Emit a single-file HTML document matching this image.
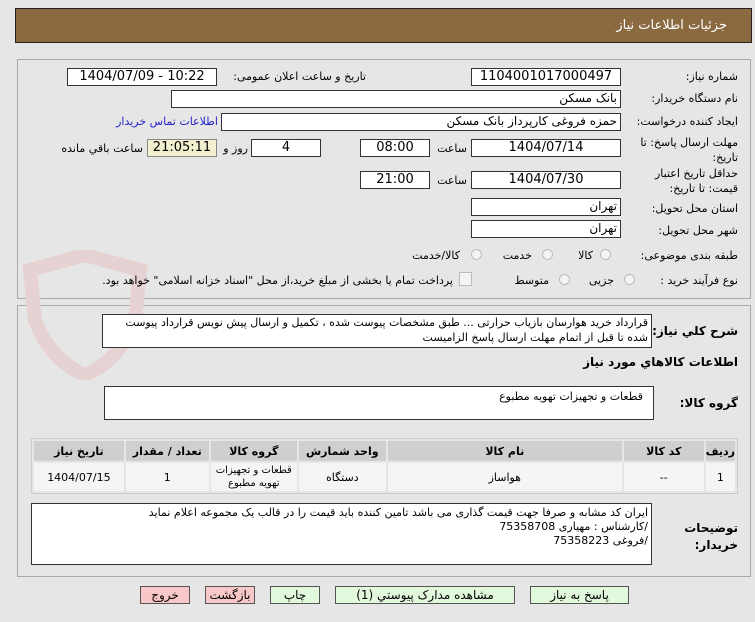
<!DOCTYPE html>
<html><head><meta charset="utf-8"><style>
body{margin:0;width:755px;height:622px;background:#e6e6e6;font-family:"DejaVu Sans","Liberation Sans",sans-serif;font-size:11px;color:#000;position:relative;overflow:hidden}
.a{position:absolute;white-space:nowrap}
.b{position:absolute;background:#fff;border:1px solid #333;box-sizing:border-box;text-align:center;line-height:15px;font-size:13px}
.r{direction:rtl;text-align:right;padding-right:3px;font-size:12px}
.l{position:absolute;direction:rtl;text-align:right;white-space:nowrap}
.p{position:absolute;border:1px solid #aaa;box-sizing:border-box}
.rad{position:absolute;width:11px;height:11px;border:1px solid #bbb;border-radius:50%;background:#f4f4f4;box-sizing:border-box}
table{position:absolute;border-collapse:separate;border-spacing:2px;background:#e6e6e6;border:1px solid #ccc}
th{background:#cfcfcf;font-weight:bold;height:20px;font-size:11px;padding:0}
td{background:#f5f5f5;text-align:center;height:28px;font-size:11px;padding:0}
.btn{position:absolute;top:586px;height:18px;border:1px solid #555;box-sizing:border-box;text-align:center;line-height:16px;font-size:12px}
</style></head><body>
<div class="a" style="left:15px;top:8px;width:737px;height:35px;background:#8b6a42;border:1px solid #222;box-sizing:border-box"></div>
<div class="l" style="right:28px;top:18px;color:#fff;font-size:13px">جزئیات اطلاعات نیاز</div>

<div class="p" style="left:17px;top:59px;width:734px;height:240px"></div>
<div class="p" style="left:17px;top:305px;width:734px;height:272px"></div>

<svg class="a" style="left:20px;top:250px" width="130" height="130"><path d="M10 20 L65 5 L120 20 L115 70 Q100 110 65 125 Q30 110 15 70 Z" fill="none" stroke="#e6d2d2" stroke-width="14"/></svg>

<div class="l" style="right:17px;top:70px">شماره نیاز:</div>
<div class="b" style="left:471px;top:68px;width:150px;height:18px">1104001017000497</div>
<div class="l" style="right:389px;top:70px">تاریخ و ساعت اعلان عمومی:</div>
<div class="b" style="left:67px;top:68px;width:150px;height:18px">1404/07/09 - 10:22</div>

<div class="l" style="right:17px;top:92px">نام دستگاه خریدار:</div>
<div class="b r" style="left:171px;top:90px;width:450px;height:18px">بانک مسکن</div>

<div class="l" style="right:17px;top:115px">ایجاد کننده درخواست:</div>
<div class="b r" style="left:221px;top:113px;width:400px;height:18px">حمزه فروغی کارپرداز بانک مسکن</div>
<div class="l" style="right:537px;top:115px;color:#2222cc">اطلاعات تماس خریدار</div>

<div class="l" style="right:17px;top:135px;line-height:15px">مهلت ارسال پاسخ: تا<br>تاریخ:</div>
<div class="b" style="left:471px;top:139px;width:150px;height:18px">1404/07/14</div>
<div class="l" style="right:288px;top:142px">ساعت</div>
<div class="b" style="left:360px;top:139px;width:70px;height:18px">08:00</div>
<div class="b" style="left:251px;top:139px;width:70px;height:18px">4</div>
<div class="l" style="right:507px;top:142px">روز و</div>
<div class="b" style="left:147px;top:139px;width:70px;height:18px;background:#f3f0cf;border-color:#888">21:05:11</div>
<div class="l" style="right:612px;top:142px">ساعت باقي مانده</div>

<div class="l" style="right:17px;top:166px;line-height:15px">حداقل تاریخ اعتبار<br>قیمت: تا تاریخ:</div>
<div class="b" style="left:471px;top:171px;width:150px;height:18px">1404/07/30</div>
<div class="l" style="right:288px;top:174px">ساعت</div>
<div class="b" style="left:360px;top:171px;width:70px;height:18px">21:00</div>

<div class="l" style="right:17px;top:202px">استان محل تحویل:</div>
<div class="b r" style="left:471px;top:198px;width:150px;height:18px">تهران</div>
<div class="l" style="right:17px;top:224px">شهر محل تحویل:</div>
<div class="b r" style="left:471px;top:220px;width:150px;height:18px">تهران</div>

<div class="l" style="right:17px;top:249px">طبقه بندی موضوعی:</div>
<div class="rad" style="left:600px;top:249px"></div><div class="l" style="right:162px;top:249px">کالا</div>
<div class="rad" style="left:542px;top:249px"></div><div class="l" style="right:223px;top:249px">خدمت</div>
<div class="rad" style="left:471px;top:249px"></div><div class="l" style="right:295px;top:249px">کالا/خدمت</div>

<div class="l" style="right:17px;top:274px">نوع فرآیند خرید :</div>
<div class="rad" style="left:624px;top:274px"></div><div class="l" style="right:141px;top:274px">جزیی</div>
<div class="rad" style="left:559px;top:274px"></div><div class="l" style="right:206px;top:274px">متوسط</div>
<div class="a" style="left:459px;top:272px;width:11px;height:12px;border:1px solid #bbb;background:#f4f4f4"></div>
<div class="l" style="right:302px;top:274px">پرداخت تمام یا بخشی از مبلغ خرید،از محل "اسناد خزانه اسلامی" خواهد بود.</div>

<div class="l" style="right:17px;top:324px;font-weight:bold;font-size:12px">شرح کلي نیاز:</div>
<div class="b r" style="left:102px;top:314px;width:550px;height:34px;line-height:15px;text-align:right;font-size:11px;white-space:normal">قرارداد خرید هوارسان بازیاب حرارتی ...   طبق مشخصات پیوست شده ، تکمیل و ارسال پیش نویس قرارداد پیوست شده تا قبل از اتمام مهلت ارسال پاسخ الزامیست</div>
<div class="l" style="right:17px;top:355px;font-weight:bold;font-size:12px">اطلاعات کالاهاي مورد نیاز</div>
<div class="l" style="right:17px;top:396px;font-weight:bold;font-size:12px">گروه کالا:</div>
<div class="b r" style="left:104px;top:386px;width:550px;height:34px;text-align:right;padding-right:10px;padding-top:2px;font-size:11px">قطعات و تجهیزات تهویه مطبوع</div>

<table style="left:31px;top:438px;width:707px" dir="rtl">
<tr><th style="width:27px">ردیف</th><th style="width:80px">کد کالا</th><th style="width:234px">نام کالا</th><th style="width:87px">واحد شمارش</th><th style="width:86px">گروه کالا</th><th style="width:83px">تعداد / مقدار</th><th>تاریخ نیاز</th></tr>
<tr><td>1</td><td>--</td><td>هواساز</td><td>دستگاه</td><td style="line-height:13px;font-size:10px">قطعات و تجهیزات<br>تهویه مطبوع</td><td>1</td><td>1404/07/15</td></tr>
</table>

<div class="l" style="right:17px;top:520px;font-weight:bold;font-size:12px;line-height:17px">توضیحات<br>خریدار:</div>
<div class="b r" style="left:31px;top:503px;width:621px;height:62px;line-height:14px;text-align:right;font-size:11px;padding-top:2px">ایران کد مشابه و صرفا جهت قیمت گذاری می باشد تامین کننده باید قیمت را در قالب یک مجموعه اعلام نماید<br>/کارشناس : مهیاری  75358708<br>/فروغی 75358223</div>

<div class="btn" style="left:140px;width:50px;background:#f8c8c8">خروج</div>
<div class="btn" style="left:205px;width:50px;background:#f8c8c8">بازگشت</div>
<div class="btn" style="left:270px;width:50px;background:#e2f8dc">چاپ</div>
<div class="btn" style="left:335px;width:180px;background:#e2f8dc">مشاهده مدارک پیوستي (1)</div>
<div class="btn" style="left:530px;width:99px;background:#e2f8dc">پاسخ به نیاز</div>
</body></html>
